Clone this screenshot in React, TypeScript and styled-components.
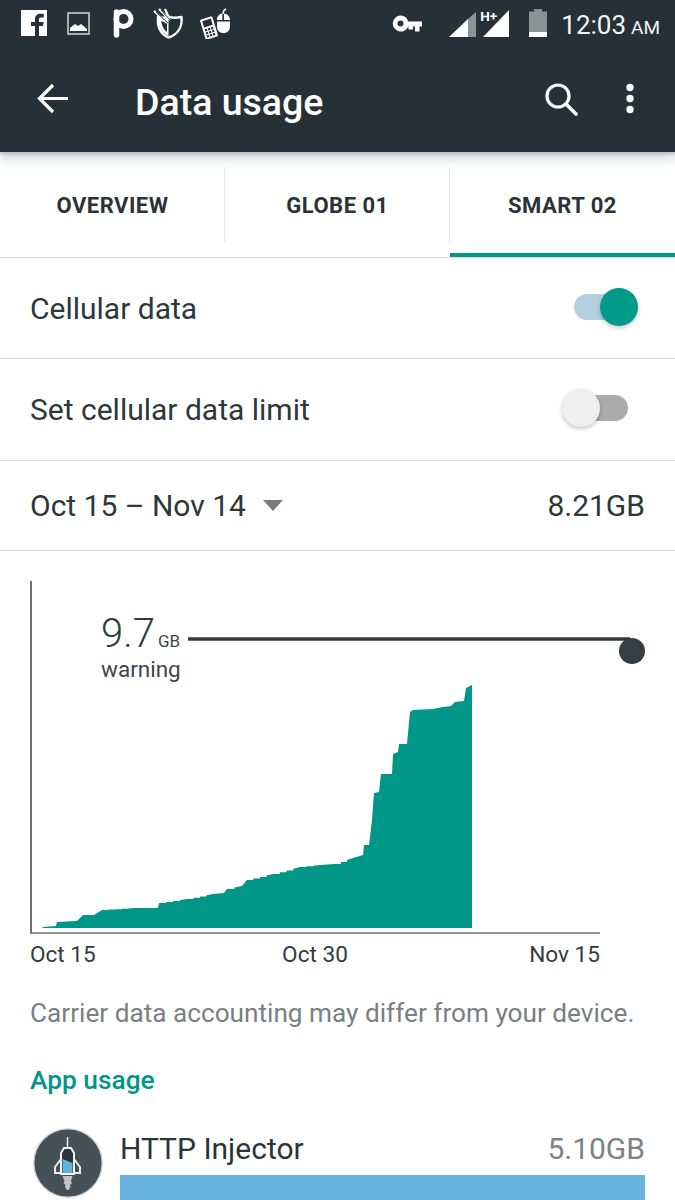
import React from "react";
import styled, { createGlobalStyle } from "styled-components";

const Global = createGlobalStyle`
  html, body { margin: 0; padding: 0; background: #fff; }
  body { font-family: Roboto, "Liberation Sans", sans-serif; }
`;

const Page = styled.div`
  width: 675px;
  height: 1200px;
  overflow: hidden;
  background: #fff;
  color: #2b3437;
`;

const Header = styled.header`
  background: #263137;
  height: 152px;
  color: #fff;
  position: relative;
  box-shadow: 0 3px 2px rgba(130, 145, 145, 0.32), 0 8px 10px rgba(130, 145, 145, 0.3);
`;

const StatusBar = styled.div`
  height: 52px;
  display: flex;
  align-items: flex-start;
  padding: 0 15px 0 21px;
  box-sizing: border-box;
`;

const Glyph = styled.svg<{ $ml: number; $mt: number }>`
  display: block;
  flex: none;
  margin-left: ${(p) => p.$ml}px;
  margin-top: ${(p) => p.$mt}px;
`;

const Clock = styled.div`
  margin-left: 14px;
  margin-top: 9px;
  font-size: 26px;
  line-height: 32px;
  white-space: nowrap;
  color: #f2f4f4;
`;

const Meridiem = styled.span`
  font-size: 19px;
  margin-left: 5px;
`;

const HPlus = styled.span`
  flex: none;
  width: 18px;
  margin-left: 4px;
  margin-top: 9px;
  font-size: 13.500px;
  font-weight: 700;
  line-height: 14px;
  white-space: nowrap;
`;

const Spacer = styled.div`
  flex: 1;
`;

const Toolbar = styled.div`
  height: 100px;
  display: flex;
  align-items: center;
  padding: 0 41px 6px 37px;
  box-sizing: border-box;
`;

const Title = styled.h1`
  margin: 5px 0 0 66px;
  font-size: 37.500px;
  font-weight: 500;
  line-height: 40px;
  flex: 1;
`;

const BackIcon = styled.svg`
  flex: none;
  display: block;
`;

const SearchIcon = styled.svg`
  flex: none;
  display: block;
  margin-right: 48px;
`;

const MoreIcon = styled.svg`
  flex: none;
  display: block;
`;

const Tabs = styled.nav`
  display: grid;
  grid-template-columns: 225px 225px 225px;
  height: 106px;
  box-sizing: border-box;
  border-bottom: 1px solid #dcdfdf;
`;

const Tab = styled.div<{ $active?: boolean; $divider?: boolean }>`
  display: flex;
  align-items: center;
  justify-content: center;
  font-size: 22px;
  font-weight: 700;
  letter-spacing: 0.5px;
  color: #2b3336;
  position: relative;
  padding-top: 6px;
  box-sizing: border-box;
  border-bottom: 4px solid ${(p) => (p.$active ? "#009688" : "transparent")};
  height: 105px;
  &::before {
    content: "";
    display: ${(p) => (p.$divider ? "block" : "none")};
    position: absolute;
    left: -1px;
    top: 15px;
    bottom: 11px;
    width: 1px;
    background: #e6e8e8;
  }
`;

const Row = styled.div<{ $h: number }>`
  height: ${(p) => p.$h}px;
  box-sizing: border-box;
  border-bottom: 1px solid #e0e2e2;
  display: flex;
  align-items: center;
  justify-content: space-between;
  padding: 0 30px;
  font-size: 30px;
  color: #2e3739;
`;

const Track = styled.div<{ $on?: boolean }>`
  width: 54px;
  height: 26px;
  border-radius: 13px;
  position: relative;
  background: ${(p) => (p.$on ? "#b4d0e0" : "#ababab")};
`;

const Knob = styled.div<{ $on?: boolean }>`
  position: absolute;
  top: -6px;
  width: 38px;
  height: 38px;
  border-radius: 50%;
  ${(p) => (p.$on ? "right: -10px;" : "left: -12px;")}
  background: ${(p) => (p.$on ? "#009a8a" : "#efefef")};
  box-shadow: 0 2px 4px rgba(0, 0, 0, 0.22);
`;

const OnSwitch = styled.div`
  margin-right: 17px;
  margin-top: -2px;
`;

const OffSwitch = styled.div`
  margin-right: 17px;
  margin-top: -3px;
`;

const Range = styled.div`
  display: flex;
  align-items: center;
  gap: 17px;
`;

const Chart = styled.section`
  position: relative;
  padding-top: 30px;
`;

const ChartSvg = styled.svg`
  display: block;
`;

const Warning = styled.div`
  position: absolute;
  left: 101px;
  top: 61px;
  color: #3c4548;
`;

const WarningValue = styled.div`
  font-size: 40px;
  line-height: 44px;
  font-weight: 300;
  white-space: nowrap;
  color: #2f3a3e;
`;

const Unit = styled.span`
  font-size: 17px;
  font-weight: 400;
  margin-left: 3px;
  color: #3c4548;
`;

const WarningLabel = styled.div`
  font-size: 22.500px;
  line-height: 26px;
  margin-top: -7px;
`;

const Dates = styled.div`
  width: 570px;
  margin-left: 30px;
  display: grid;
  grid-template-columns: 1fr auto 1fr;
  font-size: 22.600px;
  line-height: 28px;
  margin-top: 7px;
  color: #333b3e;
`;

const DateEnd = styled.span`
  justify-self: end;
`;

const Note = styled.p`
  margin: 27px 0 0 30px;
  font-size: 26.200px;
  line-height: 34px;
  color: #7a7f81;
  white-space: nowrap;
`;

const SectionTitle = styled.h2`
  margin: 33px 0 0 30px;
  font-size: 26.300px;
  line-height: 34px;
  font-weight: 500;
  color: #009688;
`;

const AppRow = styled.div`
  display: flex;
  margin-top: 33px;
  padding: 0 30px 0 33px;
  gap: 17px;
`;

const AppIcon = styled.svg`
  display: block;
  flex: none;
  width: 70px;
  height: 70px;
  margin-top: -2px;
`;

const AppBody = styled.div`
  flex: 1;
`;

const AppHead = styled.div`
  display: flex;
  justify-content: space-between;
  align-items: center;
  height: 36px;
  font-size: 30px;
  color: #2b3437;
`;

const AppSize = styled.span`
  font-size: 30px;
  color: #7d8284;
`;

const UsageBar = styled.div`
  height: 40px;
  margin-top: 9px;
  background: #69b3e0;
`;

const basePoints: [number, number][] = [
  [42, 928], [43, 927], [56, 926], [57, 922], [77, 921], [83, 915], [94, 915], [102, 910], [135, 908],
  [158, 908], [159, 903], [187, 899], [213, 894], [224, 893], [227, 889], [242, 886], [247, 880],
  [273, 874], [300, 867], [320, 865], [335, 864], [353, 858], [363, 855], [364, 845], [369, 845],
  [372, 820], [374, 793], [379, 792], [381, 774], [392, 774], [393, 754], [398, 752], [399, 744],
  [407, 744], [410, 712], [413, 710], [433, 709], [443, 707], [451, 706], [455, 702], [464, 701],
  [466, 688], [472, 685],
];

const stairs = (pts: [number, number][]) => {
  const out: string[] = [];
  pts.forEach(([x, y], i) => {
    if (i > 0) {
      const [px, py] = pts[i - 1];
      const steps = Math.floor((x - px) / 6);
      if (steps > 1 && Math.abs(y - py) > 1) {
        for (let s = 1; s < steps; s++) {
          const sx = px + ((x - px) * s) / steps;
          const sy = py + ((y - py) * s) / steps;
          out.push(`${sx.toFixed(1)},${(py + ((y - py) * (s - 1)) / steps).toFixed(1)}`);
          out.push(`${sx.toFixed(1)},${sy.toFixed(1)}`);
        }
      }
    }
    out.push(`${x},${y}`);
  });
  out.push("472,928");
  return out.join(" ");
};

const chartPoints = stairs(basePoints);
const keypad = [0, 1, 2].flatMap((r) => [0, 1, 2].map((c) => [c, r]));

export default function App() {
  return (
    <Page>
      <Global />
      <Header>
        <StatusBar>
          <Glyph $ml={0} $mt={10} width="26" height="26" viewBox="0 0 26 26">
            <path fill="#fff" d="M0 0h26v26h-8v-10h4l.6-4H18V9.500c0-1.200.4-2 2-2h2.800V4c-.5 0-1.800-.2-3.300-.2-3.300 0-5.500 2-5.500 5.500V12h-4v4h4v10H0z" />
          </Glyph>
          <Glyph $ml={20} $mt={12} width="23" height="23" viewBox="0 0 23 23">
            <rect x="1" y="1" width="21" height="21" fill="none" stroke="#d5d9da" strokeWidth="1.500" />
            <path fill="#fff" d="M3 19v-3l5-4 3 2 3-2 6 5v2z" />
          </Glyph>
          <Glyph $ml={23} $mt={8} width="21" height="30" viewBox="0 0 21 30">
            <circle cx="10.500" cy="11" r="7.500" fill="none" stroke="#fff" strokeWidth="5" />
            <path stroke="#fff" strokeWidth="5.500" strokeLinecap="round" d="M3.500 4v23" />
          </Glyph>
          <Glyph $ml={19} $mt={8} width="31" height="31" viewBox="0 0 31 31">
            <path fill="none" stroke="#fff" strokeWidth="2.400" strokeLinejoin="round" d="M5 9c3 1 7 1 10.500-.5 3 1.500 8 1.500 13 0.500 1 9-3 17-13 20.500C8 26.500 4 19 5 9z" />
            <path fill="#fff" d="M5 10c3 1 7 1 10.500 0V28C9 25 5 19 5 10z" />
            <path fill="#263137" d="M8 13l6 2v9c-3-2-5-6-6-11z" />
            <path stroke="#fff" strokeWidth="2.200" d="M1 3l13 12M6 1l11 11M12 1l4 9" />
            <path stroke="#263137" strokeWidth="1" d="M3 4l12 11M8 2l9 10" />
          </Glyph>
          <Glyph $ml={16} $mt={8} width="33" height="31" viewBox="0 0 33 31">
            <g transform="rotate(-17 9 20)">
              <rect x="2.500" y="9.500" width="13" height="21" rx="1.500" fill="#fff" />
              <rect x="4.500" y="11.500" width="9" height="6.500" fill="#263137" />
              {keypad.map(([c, r]) => (
                <rect key={`${c}${r}`} x={4.5 + c * 3.2} y={20 + r * 3.2} width="2.200" height="2.200" fill="#263137" />
              ))}
            </g>
            <path fill="#fff" d="M17 12c0-3.500 2-6 5.300-6.500V12zm7-6.500c3.500.5 6 3 6 6.500h-6zM17 13.500h13V18c0 4.500-2.500 7-6.500 7S17 22.500 17 18z" />
            <path stroke="#fff" strokeWidth="1.500" fill="none" d="M23 6c0-2 .5-4 3-5" />
          </Glyph>
          <Spacer />
          <Glyph $ml={0} $mt={15} width="31" height="18" viewBox="0 0 31 18">
            <path fill="#fff" fillRule="evenodd" d="M8.500 0.500a8 8 0 0 1 7.700 6H30v5h-2.500v5H23v-5h-2v3h-4.500v-3h-.3a8 8 0 1 1-7.700-11zm0 5a3 3 0 1 0 0 6 3 3 0 0 0 0-6z" />
          </Glyph>
          <Glyph $ml={26} $mt={12} width="27" height="25" viewBox="0 0 27 25">
            <path fill="#8d9294" d="M27 0v25H19V7z" />
            <path fill="#fff" d="M19 7v18H0z" />
          </Glyph>
          <HPlus>H+</HPlus>
          <Glyph $ml={-15} $mt={10} width="27" height="27" viewBox="0 0 27 27">
            <path fill="#fff" d="M26 0v27H0z" />
          </Glyph>
          <Glyph $ml={19} $mt={9} width="18" height="28" viewBox="0 0 18 28">
            <path fill="#8d9294" d="M5 0h8v2.500h5V23H0V2.500h5z" />
            <path fill="#fff" d="M0 23h18v5H0z" />
          </Glyph>
          <Clock>
            12:03<Meridiem>AM</Meridiem>
          </Clock>
        </StatusBar>
        <Toolbar>
          <BackIcon width="32" height="32" viewBox="0 0 32 32">
            <path fill="none" stroke="#fff" strokeWidth="3.200" d="M31 15.500H3M16 2L2.500 15.500 16 29" />
          </BackIcon>
          <Title>Data usage</Title>
          <SearchIcon width="33" height="33" viewBox="0 0 33 33">
            <circle cx="13" cy="13" r="11" fill="none" stroke="#fff" strokeWidth="3.200" />
            <path stroke="#fff" strokeWidth="3.600" strokeLinecap="round" d="M21 21l10 10" />
          </SearchIcon>
          <MoreIcon width="8" height="32" viewBox="0 0 8 32">
            <circle cx="4" cy="4.500" r="3.700" fill="#fff" />
            <circle cx="4" cy="15.500" r="3.700" fill="#fff" />
            <circle cx="4" cy="26.500" r="3.700" fill="#fff" />
          </MoreIcon>
        </Toolbar>
      </Header>

      <Tabs>
        <Tab>OVERVIEW</Tab>
        <Tab $divider>GLOBE 01</Tab>
        <Tab $divider $active>SMART 02</Tab>
      </Tabs>

      <Row $h={101}>
        Cellular data
        <OnSwitch>
          <Track $on>
            <Knob $on />
          </Track>
        </OnSwitch>
      </Row>
      <Row $h={102}>
        Set cellular data limit
        <OffSwitch>
          <Track>
            <Knob />
          </Track>
        </OffSwitch>
      </Row>
      <Row $h={90}>
        <Range>
          Oct 15 – Nov 14
          <svg width="20" height="11" viewBox="0 0 20 11">
            <path fill="#777c7e" d="M0 0h20L10 11z" />
          </svg>
        </Range>
        <span>8.21GB</span>
      </Row>

      <Chart>
        <ChartSvg width="675" height="353" viewBox="0 581 675 353">
          <polygon points={chartPoints} fill="#009688" />
          <path stroke="#6d6f70" strokeWidth="2" fill="none" d="M31 581V933" />
          <path stroke="#6d6f70" strokeWidth="1.500" fill="none" d="M30 933H600" />
          <path stroke="#333d41" strokeWidth="3.500" fill="none" d="M188 639H630" />
          <circle cx="632" cy="651" r="13" fill="#373e42" />
        </ChartSvg>
        <Warning>
          <WarningValue>
            9.7<Unit>GB</Unit>
          </WarningValue>
          <WarningLabel>warning</WarningLabel>
        </Warning>
        <Dates>
          <span>Oct 15</span>
          <span>Oct 30</span>
          <DateEnd>Nov 15</DateEnd>
        </Dates>
      </Chart>

      <Note>Carrier data accounting may differ from your device.</Note>
      <SectionTitle>App usage</SectionTitle>

      <AppRow>
        <AppIcon viewBox="0 0 70 70">
          <circle cx="35" cy="35" r="34.200" fill="#465156" stroke="#cfd3d4" strokeWidth="1.300" />
          <path stroke="#e8ebec" strokeWidth="1.500" d="M34.500 9v11" />
          <path fill="#2a3539" stroke="#f2f4f4" strokeWidth="2" d="M31 20h7l3 5v21H28V25z" />
          <path fill="#62b1df" d="M29.500 31l10 4v10h-10z" />
          <path fill="none" stroke="#e8ebec" strokeWidth="2" d="M28 31l-6 8v6h6M41 31l6 8v6h-6" />
          <path fill="#bfc4c5" d="M29.500 48h10l-1.500 5 1 2-2 2 .5 2-2 3h-1.500l-2-3 .5-2-2-2 1-2z" />
        </AppIcon>
        <AppBody>
          <AppHead>
            HTTP Injector
            <AppSize>5.10GB</AppSize>
          </AppHead>
          <UsageBar />
        </AppBody>
      </AppRow>
    </Page>
  );
}
